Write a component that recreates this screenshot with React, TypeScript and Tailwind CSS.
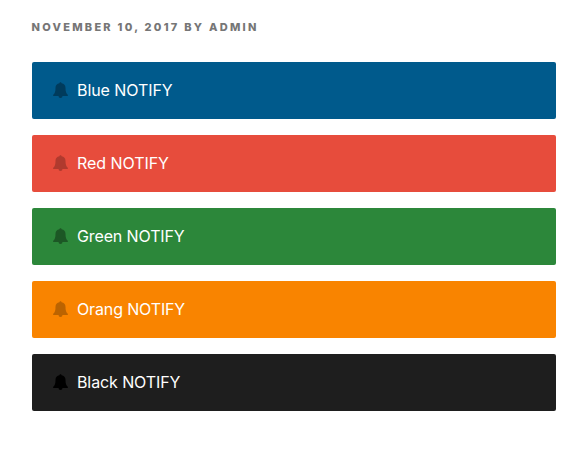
const notices = [
  { label: 'Blue NOTIFY', color: 'bg-[#005a8c]', bell: 'text-[#003b5c]', tracking: 'tracking-[-0.07px]' },
  { label: 'Red NOTIFY', color: 'bg-[#e74c3c]', bell: 'text-[#b03a2e]', tracking: 'tracking-[-0.05px]' },
  { label: 'Green NOTIFY', color: 'bg-[#2c873a]', bell: 'text-[#1c5725]', tracking: 'tracking-[-0.12px]' },
  { label: 'Orang NOTIFY', color: 'bg-[#f98400]', bell: 'text-[#bb6300]', tracking: 'tracking-[-0.14px]' },
  { label: 'Black NOTIFY', color: 'bg-[#1e1e1e]', bell: 'text-black', tracking: 'tracking-[-0.1px]' },
];

function Bell({ className }: { className: string }) {
  return (
    <svg className={`mb-px h-4 w-4 shrink-0 ${className}`} viewBox="0 0 16 16" fill="currentColor">
      <path d="M7.500 .2C8.100 .2 8.600.600 8.600 1.300C11 1.700 12.500 3.500 12.500 5.700C12.500 9.200 13 11.300 15 12.900C15 13.500 14.600 14 13.900 14H9.500A2 1.900 0 0 1 5.500 14H1.100C.400 14 0 13.500 0 12.900C2 11.300 2.500 9.200 2.500 5.700C2.500 3.500 4 1.700 6.400 1.300C6.400.600 6.900 .2 7.500 .2Z" />
    </svg>
  );
}

export default function App() {
  return (
    <main className="h-[449px] w-[582px] bg-white pt-5 pr-[26px] pl-8 font-[Inter,'Liberation_Sans',sans-serif]">
      <p className="-ml-[0.5px] text-[11px] leading-[14px] font-extrabold tracking-[2.26px] text-[#767676] uppercase">November 10, 2017 by admin</p>
      <div className="mt-7 flex flex-col gap-4">
        {notices.map((n) => (
          <div key={n.label} className={`flex h-[57px] items-center gap-2 rounded-[2px] pl-[21px] text-white ${n.color}`}>
            <Bell className={n.bell} />
            <span className={`pb-0.5 text-base ${n.tracking}`}>{n.label}</span>
          </div>
        ))}
      </div>
    </main>
  );
}
